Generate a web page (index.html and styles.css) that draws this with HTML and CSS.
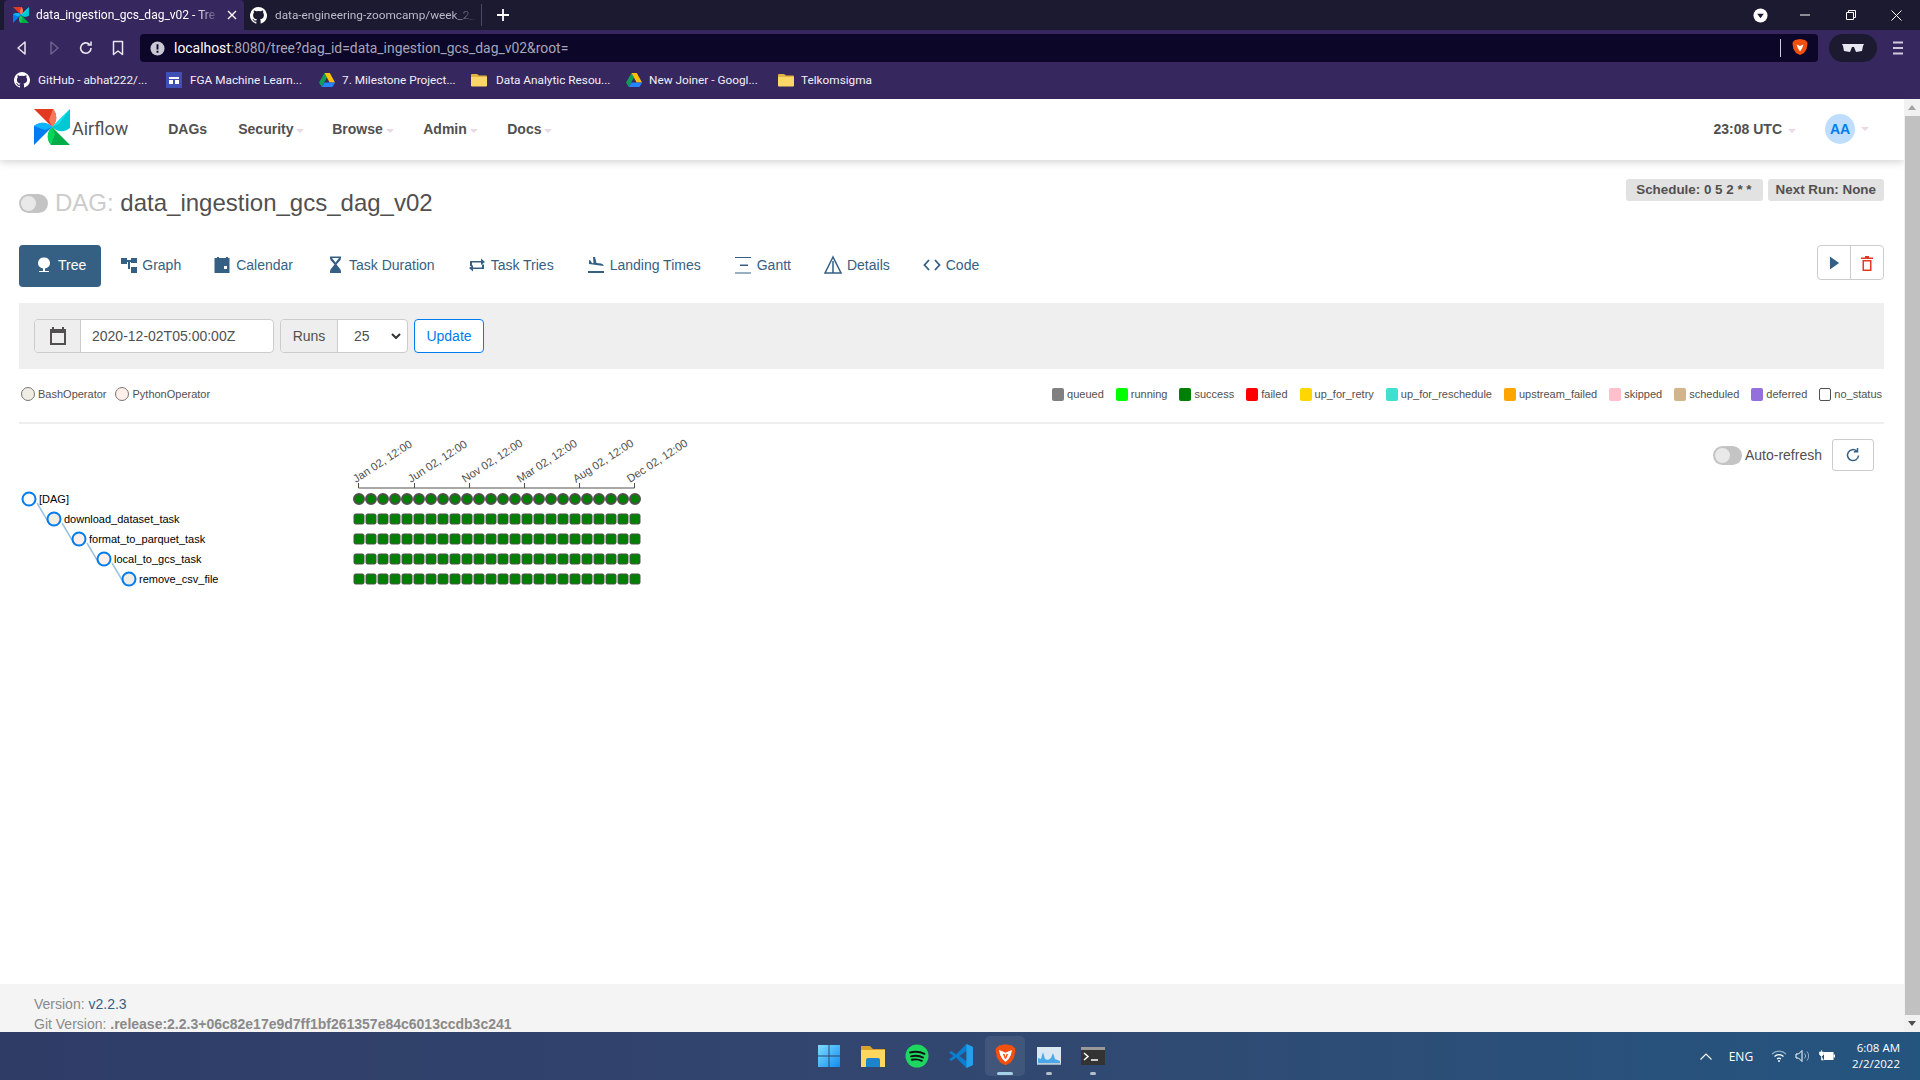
FILE: index.html
```html
<!DOCTYPE html>
<html lang="en">
<head>
<meta charset="utf-8">
<title>Airflow - data_ingestion_gcs_dag_v02</title>
<link rel="stylesheet" href="styles.css">
</head>
<body>
<svg class="defs" width="0" height="0">
  <defs>
    <g id="pin">
      <path fill="#e43921" d="M0 0 19 0C23 5 24 12 18 18Z"/><path fill="#f47a5c" d="M19 0C23 5 24 12 18 18L15 11Z"/>
      <path fill="#00c7d4" d="M36 0 36 19C31 23 24 24 18 18Z"/><path fill="#11e1ee" d="M36 0 18 18 25 15Z"/>
      <path fill="#00ad46" d="M36 36 17 36C13 31 12 24 18 18Z"/><path fill="#04d659" d="M18 18C12 24 13 31 17 36L21 25Z"/>
      <path fill="#017cee" d="M0 36 0 17C5 13 12 12 18 18Z"/><path fill="#0cb6ff" d="M18 18C12 12 5 13 0 17L11 21Z"/>
    </g>
    <path id="gh" fill="#fff" d="M8 0a8 8 0 0 0-2.500 15.600c.4.100.5-.2.5-.4v-1.400c-2.200.5-2.700-1-2.700-1-.4-.9-.9-1.200-.9-1.200-.7-.5.100-.5.100-.5.800.1 1.200.8 1.200.8.700 1.200 1.900.9 2.300.7.100-.5.300-.9.500-1.100-1.800-.2-3.600-.9-3.600-4 0-.9.300-1.600.8-2.100-.1-.2-.4-1 .1-2.100 0 0 .7-.2 2.200.8a7.500 7.500 0 0 1 4 0c1.500-1 2.200-.8 2.200-.8.500 1.100.2 1.900.1 2.100.5.500.8 1.200.8 2.100 0 3.100-1.900 3.800-3.700 4 .3.300.6.800.6 1.500v2.200c0 .2.100.5.500.4A8 8 0 0 0 8 0Z"/>
    <g id="drive">
      <path fill="#0f9d58" d="M5.500 1 0 10.500l2.700 4.500L8 5.500Z"/>
      <path fill="#ffc107" d="M5.500 1h5.300L16 10.500h-5.400Z"/>
      <path fill="#2684fc" d="M2.700 15h10.700l2.700-4.500H5.400Z"/>
    </g>
    <g id="folder">
      <path fill="#e2b33f" d="M0 3a1 1 0 0 1 1-1h5l2 1.500h7a1 1 0 0 1 1 1V14H0Z"/>
      <path fill="#fbd768" d="M0 5h16v8.500a1 1 0 0 1-1 1H1a1 1 0 0 1-1-1Z"/>
    </g>
    <path id="brave" d="M8 0 3 1 .8 3 .5 5l.9 5 2.600 4 4 2 4-2 2.600-4 .9-5-.3-2L13 1Z" fill="#f1500f"/>
    <g id="sq"><rect width="10" height="10" rx="1.500" fill="#008000" stroke="#51504f" stroke-width="1"/></g>
    <g id="sq6"><use href="#sq"/><use href="#sq" x="12"/><use href="#sq" x="24"/><use href="#sq" x="36"/><use href="#sq" x="48"/><use href="#sq" x="60"/></g>
    <g id="sqrow"><use href="#sq6"/><use href="#sq6" x="72"/><use href="#sq6" x="144"/><use href="#sq6" x="216"/></g>
    <g id="dot"><circle r="5" fill="#008000" stroke="#51504f" stroke-width="2"/></g>
    <g id="dot6"><use href="#dot"/><use href="#dot" x="12"/><use href="#dot" x="24"/><use href="#dot" x="36"/><use href="#dot" x="48"/><use href="#dot" x="60"/></g>
    <g id="dotrow"><use href="#dot6"/><use href="#dot6" x="72"/><use href="#dot6" x="144"/><use href="#dot6" x="216"/></g>
  </defs>
</svg>

<header class="chrome">
  <div class="tabstrip">
    <div class="tab tab-active">
      <svg class="tab-icon" viewBox="0 0 36 36" width="16" height="16"><use href="#pin"/></svg>
      <span class="tab-title">data_ingestion_gcs_dag_v02 - Tre</span>
      <svg class="tab-x" viewBox="0 0 10 10" width="10" height="10"><path d="M1 1l8 8M9 1 1 9" stroke="#fff" stroke-width="1.400"/></svg>
    </div>
    <div class="tab tab-idle">
      <svg viewBox="0 0 16 16" width="17" height="17"><use href="#gh"/></svg>
      <span class="tab-title tab-title-dim">data-engineering-zoomcamp/week_2_</span>
    </div>
    <svg class="tab-plus" viewBox="0 0 12 12" width="12" height="12"><path d="M6 0v12M0 6h12" stroke="#fff" stroke-width="1.800"/></svg>
    <div class="win-controls">
      <svg class="wc-drop" viewBox="0 0 16 16" width="15" height="15"><circle cx="8" cy="8" r="7.500" fill="#fff"/><path d="M4.500 6h7L8 11Z" fill="#1b1a30"/></svg>
      <svg class="wc-min" viewBox="0 0 10 2" width="10" height="2"><path d="M0 1h10" stroke="#fff"/></svg>
      <svg class="wc-max" viewBox="0 0 10 10" width="10" height="10"><path d="M.5 2.500h7v7h-7ZM2.500 2.500V.5h7v7h-2" fill="none" stroke="#fff"/></svg>
      <svg class="wc-close" viewBox="0 0 11 11" width="11" height="11"><path d="M.5.500l10 10M10.500.500l-10 10" stroke="#fff"/></svg>
    </div>
  </div>
  <div class="toolbar">
    <svg class="tb-btn" viewBox="0 0 16 16" width="16" height="16"><path d="M11 2 4 8l7 6Z" fill="none" stroke="#e8e6f0" stroke-width="1.500" stroke-linejoin="round"/></svg>
    <svg class="tb-btn" viewBox="0 0 16 16" width="16" height="16"><path d="M5 2l7 6-7 6Z" fill="none" stroke="#6c6390" stroke-width="1.500" stroke-linejoin="round"/></svg>
    <svg class="tb-btn" viewBox="0 0 16 16" width="16" height="16"><path d="M13 8a5.200 5.200 0 1 1-1.600-3.700M13 1.500v3.500H9.500" fill="none" stroke="#e8e6f0" stroke-width="1.600"/></svg>
    <svg class="tb-btn" viewBox="0 0 16 16" width="16" height="16"><path d="M3.500 1.500h9v13L8 11l-4.500 3.500Z" fill="none" stroke="#e8e6f0" stroke-width="1.500" stroke-linejoin="round"/></svg>
    <div class="urlbar">
      <svg class="url-info" viewBox="0 0 16 16" width="15" height="15"><circle cx="8" cy="8" r="7.500" fill="#c9c7d4"/><path d="M8 3.500v5.500M8 10.500v2" stroke="#0c0628" stroke-width="2"/></svg>
      <span class="url-text"><span class="url-host">localhost</span>:8080/tree?dag_id=data_ingestion_gcs_dag_v02&amp;root=</span>
      <span class="url-sep"></span>
      <svg viewBox="0 0 16 18" width="16" height="18"><use href="#brave"/><path d="M4.500 5.500 8 7l3.500-1.500L10 9.500l-2 3-2-3Z" fill="#fff"/></svg>
    </div>
    <div class="glasses">
      <svg viewBox="0 0 22 10" width="22" height="10"><path d="M0 1h22l-1 2-1 5-6 1-2-5h-2L8 9 2 8 1 3Z" fill="#e8e6f0"/></svg>
    </div>
    <svg class="tb-menu" viewBox="0 0 10 14" width="10" height="14"><path d="M0 1.500h10M0 7h10M0 12.500h10" stroke="#cfcbdd" stroke-width="2"/></svg>
  </div>
  <nav class="bookmarks">
    <a class="bm bm-1"><svg viewBox="0 0 16 16" width="16" height="16"><use href="#gh"/></svg>GitHub - abhat222/...</a>
    <a class="bm bm-2"><svg viewBox="0 0 16 16" width="16" height="16"><rect width="16" height="16" fill="#3f51b5"/><path d="M3 5h10v2H3ZM3 8h4v4H3ZM9 8h4v4H9Z" fill="#fff"/></svg>FGA Machine Learn...</a>
    <a class="bm bm-3"><svg viewBox="0 0 16 16" width="16" height="16"><use href="#drive"/></svg>7. Milestone Project...</a>
    <a class="bm bm-4"><svg viewBox="0 0 16 16" width="16" height="16"><use href="#folder"/></svg>Data Analytic Resou...</a>
    <a class="bm bm-5"><svg viewBox="0 0 16 16" width="16" height="16"><use href="#drive"/></svg>New Joiner - Googl...</a>
    <a class="bm bm-6"><svg viewBox="0 0 16 16" width="16" height="16"><use href="#folder"/></svg>Telkomsigma</a>
  </nav>
</header>

<div class="viewport">
  <div class="page">
    <div class="navbar">
      <svg class="logo" viewBox="0 0 36 36" width="36" height="36"><use href="#pin"/></svg>
      <span class="brand">Airflow</span>
      <ul class="menu">
        <li class="menu-dags">DAGs</li>
        <li class="menu-sec">Security<i class="caret"></i></li>
        <li class="menu-browse">Browse<i class="caret"></i></li>
        <li class="menu-admin">Admin<i class="caret"></i></li>
        <li class="menu-docs">Docs<i class="caret"></i></li>
      </ul>
      <div class="nav-right">
        <span class="clock">23:08 UTC<i class="caret"></i></span>
        <span class="avatar">AA</span><i class="caret"></i>
      </div>
    </div>

    <main class="content">
      <div class="head">
        <h1 class="dag-title"><span class="switch"></span><span class="dag-label">DAG:</span> data_ingestion_gcs_dag_v02</h1>
        <div class="badges">
          <span class="badge badge-wide">Schedule: 0 5 2 * *</span>
          <span class="badge">Next Run: None</span>
        </div>
      </div>

      <div class="tabs">
        <a class="pill pill-on"><svg class="pi" viewBox="0 0 20 20" width="20" height="20"><path d="M10 2.500a5.500 5.500 0 0 1 1 11v2.500h4v1H5v-1h4v-2.500a5.500 5.500 0 0 1 1-11Z" fill="#fff"/></svg>Tree</a>
        <a class="pill pill-graph"><svg class="pi" viewBox="0 0 20 20" width="20" height="20"><path d="M3 3h6v6H3ZM13 3h6v5h-6ZM13 12h6v6h-6ZM9 5h4v2H9ZM10 7h2v7h-2Z" fill="#365f84"/></svg>Graph</a>
        <a class="pill"><svg class="pi" viewBox="0 0 20 20" width="20" height="20"><path d="M5 2h2v1h7V2h2v1h1.500v15h-15V3H5Zm7 9v3h3v-3Z" fill="#365f84" fill-rule="evenodd"/></svg>Calendar</a>
        <a class="pill"><svg class="pi" viewBox="0 0 20 20" width="20" height="20"><path d="M5 1.500h11v1.500l-.5 2-4 4.500 4 5 .5 2v1.500H5V16.500l.5-2 4-5-4-4.500L5 3ZM7 3l3.500 4.500L14 3Z" fill="#365f84" fill-rule="evenodd"/></svg>Task Duration</a>
        <a class="pill"><svg class="pi" viewBox="0 0 20 20" width="20" height="20"><path d="M3 11V6h11V3.500L18 7l-4 3V7.500H5V11ZM17 9.500V14H6v2.500L2 13l4-3v2.500h9V9.500Z" fill="#365f84"/></svg>Task Tries</a>
        <a class="pill"><svg class="pi" viewBox="0 0 20 20" width="20" height="20"><path d="M2 16h16v2H2ZM7 2h2l1.500 6 4.500.5c2 .5 3 2 2.500 2.500L3 9V5l1.500.5L6 8l1.500.2Z" fill="#365f84"/></svg>Landing Times</a>
        <a class="pill"><svg class="pi" viewBox="0 0 20 20" width="20" height="20"><path d="M2 2.500h16M2 18h16" stroke="#365f84" fill="none"/><path d="M7 9.500h8v1.500H7Z" fill="#365f84"/></svg>Gantt</a>
        <a class="pill"><svg class="pi" viewBox="0 0 20 20" width="20" height="20"><path d="M10 2 2 18h16ZM10 6v12" fill="none" stroke="#365f84" stroke-width="1.500"/></svg>Details</a>
        <a class="pill"><svg class="pi" viewBox="0 0 20 20" width="20" height="20"><path d="M7 5 2.500 10 7 15M13 5l4.500 5L13 15" fill="none" stroke="#365f84" stroke-width="1.800"/></svg>Code</a>
        <div class="actions">
          <span class="act"><svg viewBox="0 0 12 14" width="11" height="14"><path d="M1 0l10 7-10 7Z" fill="#365f84"/></svg></span>
          <span class="act act-del"><svg viewBox="0 0 12 16" width="12" height="16"><path d="M4 1h4v1.500h4v1.500H0V2.500h4ZM1.500 5h9v11h-9Zm1.500 1.500v8h6v-8Z" fill="#e43921" fill-rule="evenodd"/></svg></span>
        </div>
      </div>

      <form class="filters">
        <div class="igroup igroup-date">
          <span class="addon addon-cal"><svg viewBox="0 0 16 18" width="16" height="18"><path d="M2 0h2v2h8V0h2v2h2v16H0V2h2Zm0 6v10h12V6Z" fill="#51504f" fill-rule="evenodd"/></svg></span>
          <span class="ifield">2020-12-02T05:00:00Z</span>
        </div>
        <div class="igroup igroup-runs">
          <span class="addon addon-runs">Runs</span>
          <span class="ifield ifield-select">25<svg viewBox="0 0 10 6" width="10" height="6"><path d="M1 1l4 4 4-4" fill="none" stroke="#333" stroke-width="2"/></svg></span>
        </div>
        <button class="update" type="button">Update</button>
      </form>

      <div class="legend-row">
        <div class="legend">
          <span class="op"><i class="op-dot op-bash"></i>BashOperator</span>
          <span class="op"><i class="op-dot op-python"></i>PythonOperator</span>
        </div>
        <div class="legend">
          <span class="st"><i class="sw s-queued"></i>queued</span>
          <span class="st"><i class="sw s-running"></i>running</span>
          <span class="st"><i class="sw s-success"></i>success</span>
          <span class="st"><i class="sw s-failed"></i>failed</span>
          <span class="st"><i class="sw s-retry"></i>up_for_retry</span>
          <span class="st"><i class="sw s-resched"></i>up_for_reschedule</span>
          <span class="st"><i class="sw s-upstream"></i>upstream_failed</span>
          <span class="st"><i class="sw s-skipped"></i>skipped</span>
          <span class="st"><i class="sw s-scheduled"></i>scheduled</span>
          <span class="st"><i class="sw s-deferred"></i>deferred</span>
          <span class="st"><i class="sw s-none"></i>no_status</span>
        </div>
      </div>

      <div class="tree-area">
        <svg class="tree" width="720" height="170" viewBox="0 424 720 170">
          <g class="links">
            <path d="M37 503 50 525"/><path d="M62 523 75 545"/><path d="M87 543 100 565"/><path d="M112 563 125 585"/>
          </g>
          <g class="nodes">
            <circle cx="29" cy="499" r="6.500" fill="#fff"/>
            <circle cx="54" cy="519" r="6.500" fill="#f0ede4"/>
            <circle cx="79" cy="539" r="6.500" fill="#ffefeb"/>
            <circle cx="104" cy="559" r="6.500" fill="#ffefeb"/>
            <circle cx="129" cy="579" r="6.500" fill="#f0ede4"/>
          </g>
          <g class="labels">
            <text x="39" y="503">[DAG]</text>
            <text x="64" y="523">download_dataset_task</text>
            <text x="89" y="543">format_to_parquet_task</text>
            <text x="114" y="563">local_to_gcs_task</text>
            <text x="139" y="583">remove_csv_file</text>
          </g>
          <g class="axis">
            <path d="M358.500 483v5h276v-5M414.500 483v5M469.500 483v5M524.500 483v5M579.500 483v5"/>
          </g>
          <g class="ticks">
            <text transform="translate(356 483) rotate(-33)">Jan 02, 12:00</text>
            <text transform="translate(411 483) rotate(-33)">Jun 02, 12:00</text>
            <text transform="translate(465 483) rotate(-33)">Nov 02, 12:00</text>
            <text transform="translate(520 483) rotate(-33)">Mar 02, 12:00</text>
            <text transform="translate(576 483) rotate(-33)">Aug 02, 12:00</text>
            <text transform="translate(630 483) rotate(-33)">Dec 02, 12:00</text>
          </g>
          <use href="#dotrow" x="359" y="499"/>
          <use href="#sqrow" x="354" y="514"/>
          <use href="#sqrow" x="354" y="534"/>
          <use href="#sqrow" x="354" y="554"/>
          <use href="#sqrow" x="354" y="574"/>
        </svg>
        <div class="refresh">
          <span class="switch switch-sm"></span>
          <span class="refresh-label">Auto-refresh</span>
          <span class="refresh-btn"><svg viewBox="0 0 16 16" width="16" height="16"><path d="M13.500 8.500a5.500 5.500 0 1 1-1.800-4.500M12.500 1v3.700H8.800" fill="none" stroke="#365f84" stroke-width="1.500"/></svg></span>
        </div>
      </div>
    </main>

    <footer class="foot">
      <div>Version: <a class="foot-link">v2.2.3</a></div>
      <div>Git Version: <strong>.release:2.2.3+06c82e17e9d7ff1bf261357e84c6013ccdb3c241</strong></div>
    </footer>
  </div>
  <div class="scrollbar">
    <i class="arrow arrow-up"></i>
    <span class="thumb"></span>
    <i class="arrow arrow-down"></i>
  </div>
</div>

<div class="taskbar">
  <div class="apps">
    <span class="app"><svg viewBox="0 0 24 24" width="24" height="24"><defs><linearGradient id="wg" x1="0" y1="0" x2="1" y2="1"><stop offset="0" stop-color="#7fdcff"/><stop offset="1" stop-color="#0f8df0"/></linearGradient></defs><path d="M1 1h10.500v10.500H1ZM12.500 1H23v10.500H12.500ZM1 12.500h10.500V23H1ZM12.500 12.500H23V23H12.500Z" fill="url(#wg)"/></svg></span>
    <span class="app"><svg viewBox="0 0 24 24" width="24" height="24"><path d="M0 2h9l3 3h12v18H0Z" fill="#d9a32b"/><path d="M0 6h24v17H0Z" fill="#ffd75e"/><path d="M5 16a2 2 0 0 1 2-2h10a2 2 0 0 1 2 2v7H5Z" fill="#1c84cf"/></svg></span>
    <span class="app"><svg viewBox="0 0 24 24" width="24" height="24"><circle cx="12" cy="12" r="11.500" fill="#1ed760"/><path d="M5 8.500c5-1.300 10-1 14.500 1.300M6 12.300c4.200-1 8.500-.8 12 1.200M6.800 15.800c3.600-.8 7-.6 10 1" fill="none" stroke="#111" stroke-width="1.900" stroke-linecap="round"/></svg></span>
    <span class="app"><svg viewBox="0 0 24 24" width="24" height="24"><path d="M17.500 0 24 3v18l-6.500 3L7 13.500 2.500 17 0 15.500 4.500 12 0 8.500 2.500 7 7 10.500Z" fill="#0a7fd0"/><path d="M17.500 6.500 10.500 12l7 5.500Z" fill="#2f4f7a"/><path d="M17.500 0 24 3v18l-6.500 3Z" fill="#23a0ea"/></svg></span>
    <span class="app app-on"><svg viewBox="0 0 16 18" width="21" height="24"><use href="#brave"/><path d="M3 4.500 6 5.500 8 6.500 10 5.500 13 4.500 12 8.500 10.500 11 8 13.500 5.500 11 4 8.500Z" fill="#fff"/><path d="M6 7.500h1.300L8 10l.7-2.500H10L8.500 11h-1Z" fill="#f1500f"/></svg><i class="run run-wide"></i></span>
    <span class="app"><svg viewBox="0 0 24 18" width="24" height="18"><rect width="24" height="18" fill="#dbe8f2"/><path d="M1 16v-5l3 1 2-7 2 7 3 1 3-2 2-5 2 6 5 2v2Z" fill="#4aa8ea"/><rect y="16.500" width="24" height="1.500" fill="#9fb0bf"/></svg><i class="run"></i></span>
    <span class="app"><svg viewBox="0 0 24 18" width="24" height="18"><rect width="24" height="18" fill="#333"/><rect width="24" height="3" fill="#999"/><path d="M3 6l4 3.500L3 13" fill="none" stroke="#fff" stroke-width="1.500"/><path d="M10 13h7" stroke="#fff" stroke-width="1.500"/></svg><i class="run"></i></span>
  </div>
  <div class="tray">
    <svg class="tray-chev" viewBox="0 0 12 7" width="12" height="7"><path d="M.5 6.500 6 1l5.500 5.500" fill="none" stroke="#fff" stroke-width="1.100"/></svg>
    <span class="lang">ENG</span>
    <svg class="tray-wifi" viewBox="0 0 16 12" width="16" height="12"><path d="M1 4a10 10 0 0 1 14 0" fill="none" stroke="#8fb0c8" stroke-width="1.200"/><path d="M3.500 6.500a6.500 6.500 0 0 1 9 0M6 9a3 3 0 0 1 4 0" fill="none" stroke="#fff" stroke-width="1.200"/><circle cx="8" cy="11" r="1" fill="#fff"/></svg>
    <svg class="tray-vol" viewBox="0 0 16 14" width="16" height="14"><path d="M1 5h2.500L7 1.500v11L3.500 9H1Z" fill="none" stroke="#fff"/><path d="M9.500 4.500a3.500 3.500 0 0 1 0 5M12 2.500a7 7 0 0 1 0 9" fill="none" stroke="#8fb0c8"/></svg>
    <svg class="tray-bat" viewBox="0 0 16 12" width="16" height="12"><path d="M2.500 0v2M0.500 2h4v2.500l-1.500 1.500H2L.5 4.500ZM2.500 6v4h2" fill="#fff" stroke="#fff" stroke-width=".7"/><rect x="5" y="2" width="9.500" height="8" fill="#fff"/><rect x="14.500" y="4.500" width="1.500" height="3" fill="#fff"/></svg>
    <div class="clock-tray"><div>6:08 AM</div><div>2/2/2022</div></div>
  </div>
</div>
</body>
</html>
```

FILE: styles.css
```css
* { box-sizing: border-box; }
html, body { margin: 0; height: 100%; overflow: hidden; }
body {
  display: flex;
  flex-direction: column;
  height: 1080px;
  font-family: "Liberation Sans", Arial, sans-serif;
  font-size: 14px;
  color: #51504f;
  background: #fff;
}
.defs { position: absolute; }
i { display: inline-block; font-style: normal; }

/* browser chrome */
.chrome { flex: none; font-family: Roboto, "Liberation Sans", sans-serif; }
.tabstrip { height: 30px; background: #1b1a30; display: flex; align-items: center; padding-left: 4px; }
.tab { height: 30px; display: flex; align-items: center; width: 240px; }
.tab-active { background: #36275e; border-radius: 4px 4px 0 0; padding: 0 7px 0 9px; color: #fff; }
.tab-icon { flex: none; margin-right: 7px; }
.tab-title { font-size: 12px; white-space: nowrap; overflow: hidden; flex: 1; -webkit-mask-image: linear-gradient(90deg, #000 88%, transparent 100%); mask-image: linear-gradient(90deg, #000 88%, transparent 100%); }
.tab-x { flex: none; margin-left: 8px; }
.tab-idle { padding: 0 5px 0 6px; gap: 8px; color: #c9c7d4; border-right: 1px solid #4a4560; height: 22px; width: 238px; }
.tab-title-dim { color: #bdbbc9; font-size: 11.800px; }
.tab-plus { margin-left: 15px; }
.win-controls { margin-left: auto; display: flex; align-items: center; }
.wc-drop { margin-right: 32px; }
.wc-min { margin-right: 36px; }
.wc-max { margin-right: 35px; }
.wc-close { margin-right: 18px; }

.toolbar { height: 32px; background: #36275e; display: flex; align-items: center; padding: 4px 0 0 14px; }
.tb-btn { flex: none; margin-right: 16px; }
.urlbar {
  flex: none; margin-left: -2px; width: 1678px; height: 28px; background: #0c0628; border-radius: 4px;
  display: flex; align-items: center; padding: 0 10px 0 10px;
}
.url-info { flex: none; margin-right: 9px; }
.url-text { font-size: 13.900px; color: #a8a5b8; white-space: nowrap; flex: 1; }
.url-host { color: #fff; }
.url-sep { width: 1px; height: 18px; background: #cfcbdd; margin-right: 11px; }
.glasses { flex: none; margin-left: 11px; width: 48px; height: 28px; border-radius: 14px; background: #1b1a30; display: flex; align-items: center; justify-content: center; }
.tb-menu { margin-left: 16px; flex: none; }

.bookmarks { height: 37px; padding-bottom: 2px; background: #36275e; display: flex; align-items: center; padding-left: 14px; }
.bm { display: flex; align-items: center; gap: 8px; font-size: 11.800px; color: #f1eff8; white-space: nowrap; }
.bm-1 { width: 152px; }
.bm-2 { width: 153px; }
.bm-3 { width: 152px; gap: 7px; }
.bm-4 { width: 155px; gap: 9px; }
.bm-5 { width: 152px; gap: 7px; }
.bm-6 { gap: 7px; }

/* viewport */
.viewport { flex: 1; display: flex; min-height: 0; }
.page { flex: 1; display: flex; flex-direction: column; min-width: 0; }
.scrollbar { flex: none; width: 16px; background: #f1f1f1; display: flex; flex-direction: column; align-items: center; position: relative; }
.thumb { flex: 1; width: 15px; background: #c1c1c1; margin: 17px 0; }
.arrow { position: absolute; width: 0; height: 0; border-left: 4px solid transparent; border-right: 4px solid transparent; }
.arrow-up { top: 6px; border-bottom: 5px solid #a3a3a3; }
.arrow-down { bottom: 6px; border-top: 5px solid #505050; }

/* navbar */
.navbar { flex: none; height: 61px; padding: 0 34px 2px; display: flex; align-items: center; background: #fff; box-shadow: 0 2px 8px rgba(0,0,0,.18); position: relative; }
.logo { flex: none; margin-top: -3px; }
.brand { font-family: Roboto, sans-serif; font-size: 18px; color: #51504f; margin-left: 2px; margin-top: -1px; }
.menu { list-style: none; display: flex; margin: 0; padding: 0 0 0 40px; font-weight: 700; font-size: 14px; }
.menu li { white-space: nowrap; }
.menu-dags { width: 70px; }
.menu-sec { width: 94px; }
.menu-browse { width: 91px; }
.menu-admin { width: 84px; }
.caret { width: 0; height: 0; border-left: 4px solid transparent; border-right: 4px solid transparent; border-top: 4px solid #e9d8e6; margin-left: 3px; vertical-align: 1px; }
.nav-right { margin-left: auto; display: flex; align-items: center; font-weight: 700; margin-right: 1px; }
.clock { margin-right: 29px; white-space: nowrap; }
.clock .caret { margin-left: 6px; }
.avatar { width: 30px; height: 30px; border-radius: 50%; background: #bfdefe; color: #017cee; display: flex; align-items: center; justify-content: center; }
.nav-right > .caret { margin-left: 6px; }

/* content */
.content { flex: 1; padding: 0 20px 0 19px; min-height: 0; }
.head { display: flex; justify-content: space-between; align-items: flex-start; padding-top: 19px; height: 85px; }
.dag-title { margin: 10px 0 0; font-size: 24px; font-weight: 400; line-height: 28px; color: #51504f; display: flex; align-items: center; white-space: pre; }
.dag-label { color: #ccc; }
.switch { width: 29px; height: 19px; border-radius: 10px; background: #c4c4c4; position: relative; margin-right: 7px; flex: none; }
.switch::after { content: ""; position: absolute; left: 2px; top: 2px; width: 15px; height: 15px; border-radius: 50%; background: #e9e9e9; }
.badges { display: flex; gap: 5px; }
.badge { height: 22px; line-height: 21px; padding: 0 8px; background: #e2e2e2; border-radius: 3px; font-weight: 700; font-size: 13.400px; white-space: nowrap; }
.badge-wide { padding: 0 11px 0 10px; }

.tabs { display: flex; align-items: flex-start; height: 58px; }
.pill { display: flex; align-items: center; height: 42px; padding: 0 15px 2px 17px; gap: 4px; color: #365f84; border-radius: 4px; white-space: nowrap; }
.pi { flex: none; }
.pill-on { background: #365f84; color: #fff; padding-left: 15px; }
.pill-graph { padding-right: 14px; }
.actions { margin-left: auto; display: flex; height: 35px; border: 1px solid #ccc; border-radius: 4px; }
.act { width: 32px; display: flex; align-items: center; justify-content: center; }
.act-del { width: 33px; border-left: 1px solid #ccc; }

.filters { height: 66px; background: #efefef; display: flex; align-items: center; padding-left: 15px; gap: 6px; }
.igroup { height: 34px; display: flex; border: 1px solid #ccc; border-radius: 4px; background: #fff; overflow: hidden; }
.igroup-date { width: 240px; }
.igroup-runs { width: 128px; }
.addon { display: flex; align-items: center; justify-content: center; background: #eee; border-right: 1px solid #ccc; flex: none; }
.addon-cal { width: 46px; }
.addon-runs { width: 57px; }
.ifield { flex: 1; display: flex; align-items: center; padding-left: 11px; color: #51504f; white-space: nowrap; }
.ifield-select { padding-left: 16px; justify-content: space-between; padding-right: 6px; }
.update { width: 70px; height: 34px; background: #fff; border: 1px solid #017cee; border-radius: 4px; color: #017cee; font: inherit; padding: 0; }

.legend-row { height: 55px; display: flex; justify-content: space-between; align-items: center; border-bottom: 2px solid #eee; padding-bottom: 3px; }
.legend { display: flex; gap: 12px; font-size: 11px; white-space: nowrap; }
.op { display: flex; align-items: center; gap: 3px; margin-right: -5px; }
.op-dot { width: 14px; height: 14px; border-radius: 50%; border: 1px solid #777; margin-left: 2px; }
.op-bash { background: #f0ede4; }
.op-python { background: #ffefeb; }
.st { display: flex; align-items: center; gap: 3px; }
.sw { width: 12px; height: 13px; border-radius: 2px; border: 1px solid transparent; }
.s-queued { background: gray; }
.s-running { background: lime; }
.s-success { background: green; }
.s-failed { background: red; }
.s-retry { background: gold; }
.s-resched { background: turquoise; }
.s-upstream { background: orange; }
.s-skipped { background: pink; }
.s-scheduled { background: tan; }
.s-deferred { background: mediumpurple; }
.s-none { background: #fff; border-color: #51504f; }
.legend-row .legend:last-child { padding-right: 2px; }

.tree-area { display: flex; justify-content: space-between; align-items: flex-start; }
.tree { flex: none; margin-left: -19px; display: block; }
.links path { fill: none; stroke: #9cc3e0; stroke-width: 1.500; }
.nodes circle { stroke: #017cee; stroke-width: 2; }
.labels text { font-size: 11px; fill: #000; }
.axis path { fill: none; stroke: #51504f; stroke-width: 1; }
.ticks text { font-size: 11.200px; fill: #51504f; }
.refresh { display: flex; align-items: center; margin: 15px 10px 0 0; }
.switch-sm { margin-right: 3px; }
.refresh-label { margin-right: 10px; }
.refresh-btn { width: 42px; height: 32px; border: 1px solid #ccc; border-radius: 3px; display: flex; align-items: center; justify-content: center; }

.foot { flex: none; height: 48px; background: #f4f4f4; padding: 10px 34px 0; line-height: 20px; color: #8a8a8a; white-space: nowrap; overflow: hidden; }
.foot-link { color: #365f84; }

/* taskbar */
.taskbar { flex: none; height: 48px; background: linear-gradient(90deg, #2e3c66 0%, #32476f 50%, #24557f 100%); position: relative; display: flex; align-items: center; justify-content: center; color: #fff; font-family: "Open Sans", sans-serif; }
.apps { display: flex; gap: 4px; margin-left: 2px; }
.app { width: 40px; height: 40px; display: flex; align-items: center; justify-content: center; border-radius: 5px; position: relative; }
.app-on { background: rgba(255,255,255,.08); }
.run { position: absolute; bottom: 1px; left: 17px; width: 6px; height: 3px; border-radius: 2px; background: #b5bfcc; }
.run-wide { left: 12px; width: 16px; background: #a5d0e8; }
.tray { position: absolute; right: 20px; top: 0; bottom: 0; display: flex; align-items: center; font-size: 11.500px; }
.tray-chev { margin-right: 17px; }
.lang { margin-right: 18px; font-size: 12px; }
.tray-wifi { margin-right: 8px; }
.tray-vol { margin-right: 8px; }
.tray-bat { margin-right: 17px; }
.clock-tray { text-align: right; line-height: 16px; }
```
